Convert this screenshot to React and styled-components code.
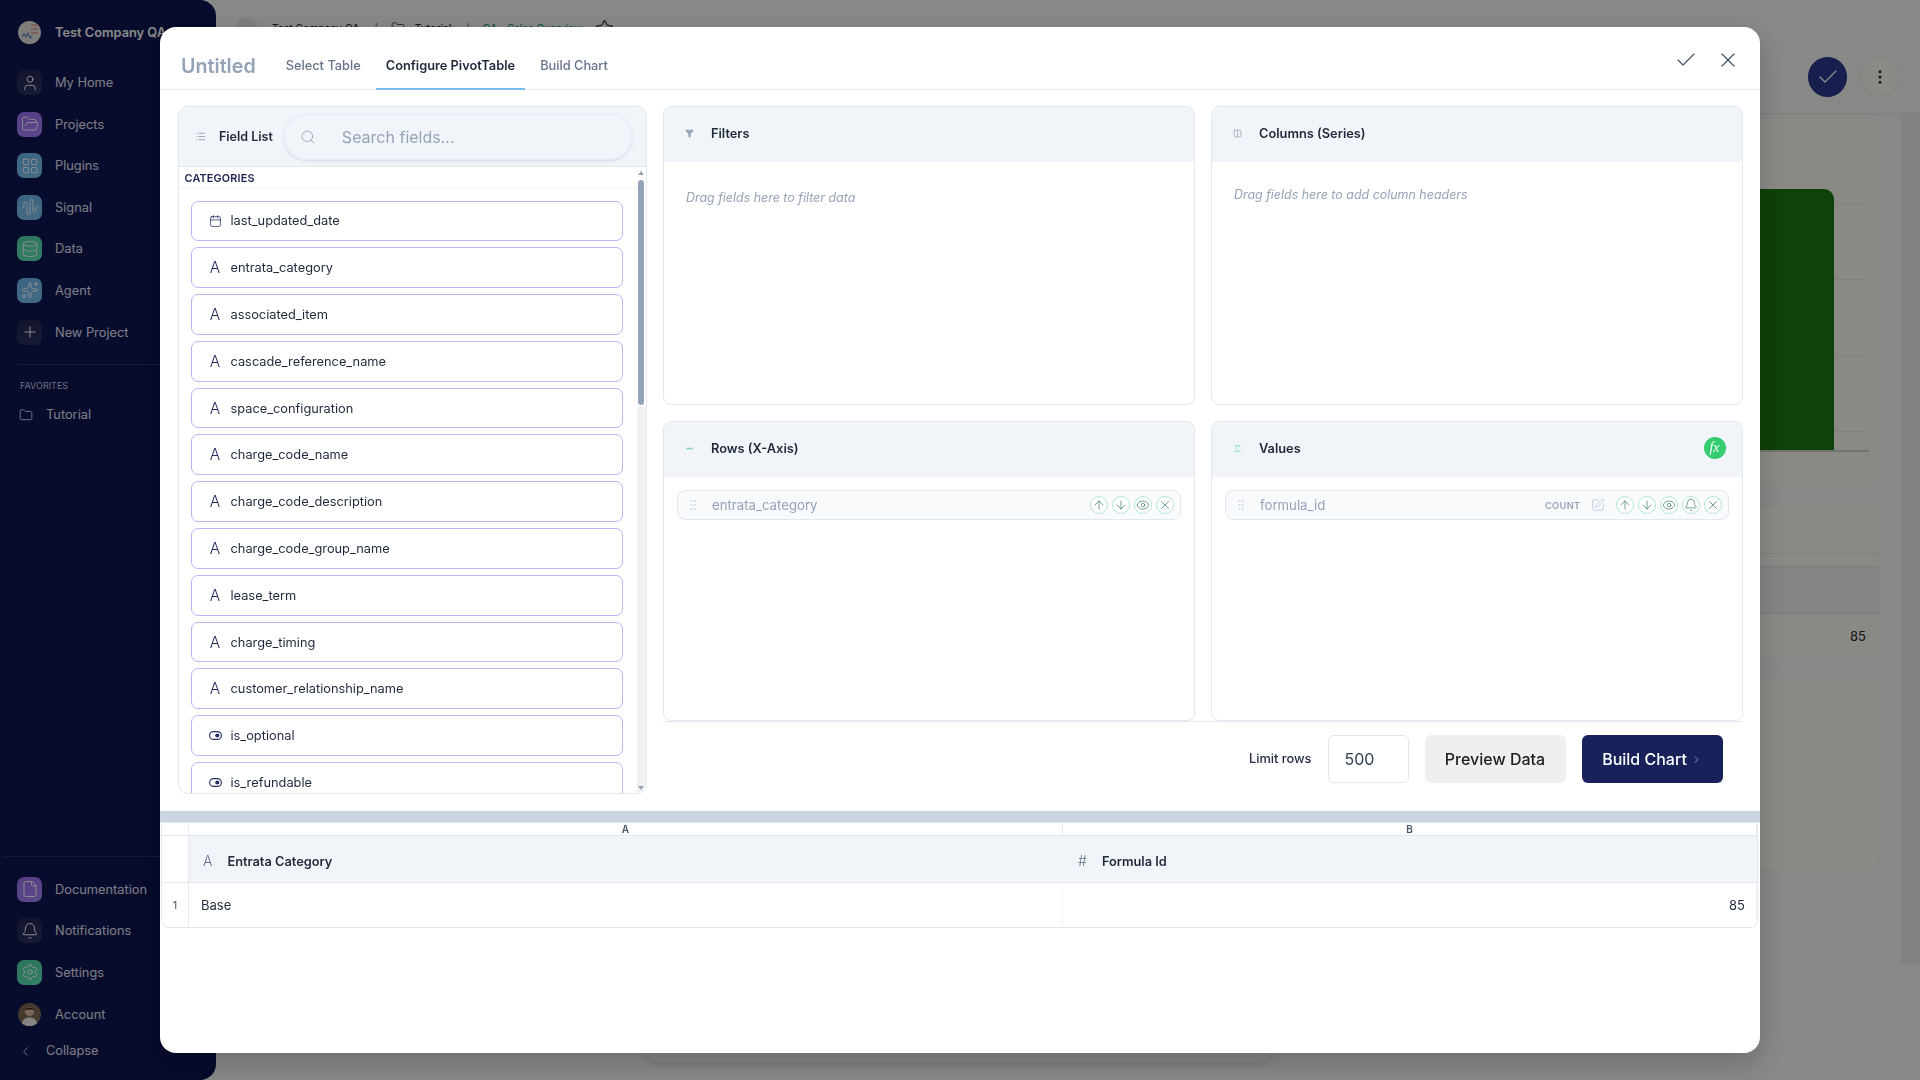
import React from "react";
import styled, { createGlobalStyle } from "styled-components";
import {
  User, FolderOpen, LayoutGrid, AudioWaveform, Database, Sparkles, Plus, File, Bell, Settings,
  ChevronLeft, ChevronRight, Folder, Star, Check, MoreVertical, Search, List, Funnel, Columns2,
  ArrowUp, ArrowDown, Eye, X, SquarePen, GripVertical, Sigma, Calendar, Minus,
} from "lucide-react";

const Global = createGlobalStyle`
  html, body { margin: 0; padding: 0; height: 100%; overflow: hidden; }
  body { font-family: Inter, "Noto Sans", "Liberation Sans", sans-serif; background: #f7f7f5; }
  * { box-sizing: border-box; }
`;

/* ---------- page behind the dialog ---------- */
const Shell = styled.div`
  position: relative;
  display: flex;
  height: 100vh;
  overflow: hidden;
`;
const Sidebar = styled.aside`
  width: 216px;
  flex: none;
  display: flex;
  flex-direction: column;
  background: #0d1450;
  border-radius: 0 16px 16px 0;
  padding-top: 20px;
  color: #e1e5f5;
  font-size: 12.8px;
`;
const Brand = styled.div`
  display: flex;
  align-items: center;
  gap: 13px;
  padding-left: 17px;
  height: 25px;
  margin-bottom: 25px;
  font-weight: 600;
  white-space: nowrap;
  color: #fbfcff;
`;
const NavGroup = styled.nav`
  display: flex;
  flex-direction: column;
  gap: 16.6px;
  padding-left: 17px;
`;
const NavItem = styled.div`
  display: flex;
  align-items: center;
  gap: 13px;
  height: 25px;
  font-weight: 400;
`;
const toneMap = {
  dark: "linear-gradient(160deg,#1f2550,#2c3262)",
  purple: "linear-gradient(160deg,#9a6ff0,#a886ff)",
  blue: "linear-gradient(160deg,#6bb7f0,#7cc4f2)",
  green: "linear-gradient(160deg,#52d6a8,#5ce6bb)",
};
const NavIcon = styled.span`
  width: 25px;
  height: 25px;
  border-radius: 7px;
  display: flex;
  align-items: center;
  justify-content: center;
  background: ${(p) => toneMap[p.$tone]};
  color: #fff;
`;
const NavRule = styled.div`
  height: 1px;
  background: #2a3068;
  margin: ${(p) => p.$margin};
`;
const FavLabel = styled.div`
  padding-left: 20px;
  font-size: 9px;
  line-height: 12px;
  color: #c8cce0;
  margin-bottom: 15px;
`;
const FavItem = styled.div`
  display: flex;
  align-items: center;
  gap: 13px;
  padding-left: 19px;
  line-height: 16px;
`;
const SidebarFoot = styled.div`
  margin-top: auto;
  padding-bottom: 21px;
`;
const Collapse = styled.div`
  display: flex;
  align-items: center;
  gap: 13px;
  padding-left: 18px;
  margin-top: 16.5px;
  line-height: 16px;
`;
const AvatarDot = styled.span`
  width: 23px;
  height: 23px;
  margin: 1px;
  border-radius: 50%;
  overflow: hidden;
  flex: none;
  display: block;
`;

const Main = styled.main`
  flex: 1;
  min-width: 0;
  display: flex;
  flex-direction: column;
`;
const TopBar = styled.header`
  height: 114px;
  flex: none;
  border-bottom: 1px solid #e6e6e2;
`;
const Crumbs = styled.div`
  height: 56px;
  display: flex;
  align-items: center;
  padding-left: 20px;
  font-size: 10.2px;
  font-weight: 500;
  color: #33343c;
`;
const CrumbAvatar = styled.span`
  width: 22px;
  height: 22px;
  border-radius: 50%;
  background: #e8e8ea;
  margin-right: 14px;
`;
const Slash = styled.span`
  margin: 0 13px;
  color: #8a8a90;
  font-weight: 300;
  font-size: 15px;
`;
const CrumbFolder = styled.span`
  display: flex;
  align-items: center;
  gap: 10px;
`;
const CrumbLink = styled.span`
  color: #1f9a86;
  margin-right: 12px;
`;
const Actions = styled.div`
  display: flex;
  justify-content: flex-end;
  gap: 13px;
  padding: 1px 21px 0 0;
`;
const RoundAction = styled.button`
  width: 39px;
  height: 40px;
  padding: 0;
  border-radius: 50%;
  display: flex;
  align-items: center;
  justify-content: center;
  background: ${(p) => (p.$primary ? "#2c388c" : "#fbfcf4")};
  color: ${(p) => (p.$primary ? "#fff" : "#2a2a2a")};
  border: 1px solid ${(p) => (p.$primary ? "#2c388c" : "#ececea")};
`;
const Content = styled.div`
  flex: 1;
  display: flex;
  min-height: 0;
`;
const CardColumn = styled.div`
  flex: 1;
  min-width: 0;
  display: flex;
  flex-direction: column;
  gap: 22px;
  padding: 4px 22px 0 0;
`;
const Track = styled.div`
  width: 19px;
  height: 851px;
  flex: none;
  background: #ededea;
`;
const Card = styled.section`
  background: #fbfcf3;
  border: 1px solid #f2f2ec;
  border-radius: 12px;
  overflow: hidden;
  flex: none;
`;
const ChartCard = styled(Card)`
  padding: 70px 9px 30px 0;
`;
const ChartArea = styled.div`
  height: 263px;
  display: flex;
  justify-content: flex-end;
  padding-right: 35px;
  border-bottom: 2px solid #d2d2cc;
  background: repeating-linear-gradient(to bottom, transparent 0, transparent 14px, #ecece6 14px, #ecece6 15px, transparent 15px, transparent 76px);
`;
const Bar = styled.div`
  width: 300px;
  background: #19780f;
  border-radius: 10px 10px 0 0;
`;
const TableCard = styled(Card)`
  height: 152px;
  padding-top: 47px;
`;
const MiniLetters = styled.div`
  height: 13px;
  border-top: 1px solid #e3e5e8;
`;
const MiniHead = styled.div`
  height: 48px;
  background: #eff1f4;
  border-top: 1px solid #dfe3e8;
  border-bottom: 1px solid #dfe3e8;
`;
const MiniRow = styled.div`
  height: 43px;
  display: flex;
  align-items: center;
  justify-content: flex-end;
  padding-right: 12px;
  font-size: 13px;
  color: #2a2a2e;
`;
const PlainCard = styled(Card)`
  height: 190px;
`;
const Dock = styled.div`
  position: absolute;
  left: 645px;
  bottom: 17px;
  width: 628px;
  height: 60px;
  border-radius: 16px;
  background: #f0f0ee;
  box-shadow: 0 2px 6px rgba(0,0,0,.12);
`;

/* ---------- overlay and dialog ---------- */
const Overlay = styled.div`
  position: fixed;
  inset: 0;
  background: rgba(0, 0, 0, 0.45);
  display: flex;
  align-items: center;
  justify-content: center;
`;
const Dialog = styled.div`
  width: 1600px;
  height: 1026px;
  background: #fff;
  border-radius: 16px;
  overflow: hidden;
  display: flex;
  flex-direction: column;
  box-shadow: 0 10px 30px rgba(0, 0, 0, 0.2);
  color: #1e293b;
`;
const DialogHead = styled.header`
  height: 63px;
  flex: none;
  display: flex;
  align-items: stretch;
  padding: 0 20px 0 21px;
  border-bottom: 1px solid #e2e8f0;
`;
const Title = styled.h1`
  margin: 0 20px 0 0;
  font-size: 19.7px;
  font-weight: 600;
  color: #94a3b8;
  align-self: center;
  padding-top: 16px;
  line-height: 26px;
`;
const Tabs = styled.div`
  display: flex;
  gap: 5px;
`;
const Tab = styled.button`
  background: none;
  border: 0;
  padding: 16px 10px 0;
  margin-bottom: -1px;
  font: inherit;
  font-size: 12.8px;
  font-weight: ${(p) => (p.$active ? 600 : 500)};
  color: ${(p) => (p.$active ? "#1e293b" : "#64748b")};
  border-bottom: 2px solid ${(p) => (p.$active ? "#7cbcec" : "transparent")};
`;
const HeadActions = styled.div`
  margin-left: auto;
  display: flex;
  align-items: center;
  gap: 18px;
  color: #475569;
  padding-top: 3px;
`;
const Workspace = styled.div`
  height: 721px;
  flex: none;
  display: grid;
  grid-template-columns: 468.5px 1fr;
  gap: 16.5px;
  padding: 16px 17.5px 17px 18px;
`;
const FieldPanel = styled.section`
  border: 1px solid #e2e8f0;
  border-radius: 10px;
  overflow: hidden;
  display: flex;
  flex-direction: column;
  min-height: 0;
`;
const FieldHead = styled.div`
  height: 60px;
  flex: none;
  background: #f1f5f9;
  border-bottom: 1px solid #e2e8f0;
  display: flex;
  align-items: center;
  padding: 0 13.5px 0 16px;
  font-size: 12.5px;
  font-weight: 600;
  color: #1e293b;
`;
const HeadLabel = styled.span`
  margin: 0 11px 0 13px;
  white-space: nowrap;
`;
const SearchPill = styled.label`
  flex: 1;
  height: 46px;
  border-radius: 23px;
  background: #f1f5f9;
  box-shadow: 0 1px 3px rgba(148, 163, 184, 0.35), inset 0 0 0 1px #e8edf3;
  display: flex;
  align-items: center;
  gap: 26px;
  padding-left: 16px;
  color: #94a3b8;
  font-size: 16px;
  font-weight: 400;
`;
const FieldBody = styled.div`
  flex: 1;
  min-height: 0;
  display: flex;
`;
const FieldScroll = styled.div`
  flex: 1;
  min-width: 0;
  overflow: hidden;
`;
const CatLabel = styled.div`
  height: 22px;
  border-bottom: 1px solid #f1f5f9;
  padding-left: 5.5px;
  font-size: 10.8px;
  font-weight: 600;
  line-height: 24px;
  letter-spacing: 0.2px;
  color: #1a2352;
`;
const FieldList = styled.div`
  display: flex;
  flex-direction: column;
  gap: 6px;
  padding: 11.5px 13.5px 0 11.5px;
`;
const FieldRow = styled.div`
  height: 40.8px;
  flex: none;
  display: flex;
  align-items: center;
  gap: 9px;
  padding-left: 17px;
  border: 1px solid #c4b0f5;
  border-radius: 7px;
  font-size: 12.8px;
  color: #1e293b;
`;
const TypeSlot = styled.span`
  width: 13px;
  display: flex;
  justify-content: center;
  color: #2a3166;
`;
const TypeLetter = styled.span`
  font-size: 15.5px;
  font-weight: 300;
  line-height: 15px;
  color: #1e2558;
`;
const ScrollRail = styled.div`
  width: 9px;
  flex: none;
  display: flex;
  flex-direction: column;
  align-items: center;
  background: linear-gradient(to bottom, #fff 0, #fff 240px, #f1f1f1 240px);
`;
const RailArrow = styled.span`
  width: 0;
  height: 0;
  border-left: 3px solid transparent;
  border-right: 3px solid transparent;
  margin: ${(p) => p.$margin};
  ${(p) => (p.$up ? "border-bottom: 4px solid #94a3b8;" : "border-top: 4px solid #94a3b8;")}
`;
const RailThumb = styled.div`
  width: 6px;
  height: 225px;
  background: #94a3b8;
  border-radius: 3px;
`;
const RailSpacer = styled.div`
  flex: 1;
`;
const RightSide = styled.div`
  display: flex;
  flex-direction: column;
  min-height: 0;
`;
const ZoneGrid = styled.div`
  height: 615px;
  flex: none;
  display: grid;
  grid-template-columns: 1fr 1fr;
  grid-template-rows: 299px 300px;
  gap: 16px 16.5px;
`;
const Zone = styled.section`
  border: 1px solid #e2e8f0;
  border-radius: 8px;
  overflow: hidden;
  display: flex;
  flex-direction: column;
`;
const ZoneHead = styled.div`
  height: 55px;
  flex: none;
  background: #f1f5f9;
  display: flex;
  align-items: center;
  padding: 0 16px 3px 21px;
  font-size: 12.8px;
  font-weight: 600;
  color: #1e293b;
`;
const ZoneIcon = styled.span`
  width: 9px;
  display: flex;
  justify-content: center;
  margin-right: 17px;
  color: ${(p) => p.$color};
`;
const FxBadge = styled.span`
  margin-left: auto;
  width: 22px;
  height: 22px;
  border-radius: 50%;
  background: #33cc71;
  color: #fff;
  display: flex;
  align-items: center;
  justify-content: center;
  font-family: "Liberation Serif", serif;
  font-style: italic;
  font-weight: 400;
  font-size: 14px;
`;
const Placeholder = styled.p`
  margin: 0;
  padding: ${(p) => p.$top}px 22px 0;
  font-size: 12.45px;
  font-style: italic;
  line-height: 16px;
  color: #94a3b8;
`;
const ZoneBody = styled.div`
  padding: 13px 13px 0;
`;
const Chip = styled.div`
  height: 30px;
  display: flex;
  align-items: center;
  border: 1px solid #e2e8f0;
  border-radius: 8px;
  background: #f8fafc;
  padding: 0 6px 0 8px;
  font-size: 13.2px;
  color: #94a3b8;
`;
const Handle = styled.span`
  display: flex;
  color: #cbd5e1;
  margin-right: 12px;
`;
const ChipControls = styled.span`
  margin-left: auto;
  display: flex;
  align-items: center;
  gap: 4px;
`;
const Agg = styled.span`
  font-size: 9.3px;
  font-weight: 600;
  color: #94a3b8;
  letter-spacing: 0.3px;
  margin-right: 6px;
`;
const EditIcon = styled.span`
  display: flex;
  color: #b4bfce;
  margin-right: 7px;
`;
const RoundIcon = styled.span`
  width: 18px;
  height: 18px;
  border-radius: 50%;
  border: 1px solid #b5e6db;
  display: flex;
  align-items: center;
  justify-content: center;
  color: #47817a;
  background: #fff;
`;
const Footer = styled.div`
  flex: 1;
  border-top: 1px solid #e2e8f0;
  display: flex;
  align-items: flex-start;
  justify-content: flex-end;
  gap: 16px;
  padding: 13px 20px 0 0;
  font-size: 12.8px;
`;
const LimitLabel = styled.span`
  font-weight: 500;
  color: #1e293b;
  line-height: 48px;
`;
const LimitBox = styled.div`
  width: 81px;
  height: 48px;
  border: 1px solid #e2e8f0;
  border-radius: 6px;
  font-size: 16px;
  line-height: 46px;
  padding-left: 16px;
  color: #334155;
`;
const FootButton = styled.button`
  width: 141px;
  height: 48px;
  border: 0;
  border-radius: 6px;
  font: inherit;
  font-size: 16px;
  font-weight: 500;
  background: ${(p) => (p.$primary ? "#18215a" : "#efefef")};
  color: ${(p) => (p.$primary ? "#fff" : "#1e1e1e")};
  display: flex;
  align-items: center;
  justify-content: center;
  gap: 4px;
`;
const SplitBar = styled.div`
  height: 12px;
  flex: none;
  background: #cbd5e1;
  border-bottom: 1px solid #e2e8f0;
`;
const Sheet = styled.div`
  margin: 0 2px 0 1px;
  display: grid;
  grid-template-columns: 27px 874px 1fr;
  grid-template-rows: 13px 47px 44px;
  border: 1px solid #e2e8f0;
  border-top: 0;
  border-radius: 0 0 8px 8px;
  overflow: hidden;
`;
const LetterCell = styled.div`
  border-right: 1px solid #e8edf3;
  border-bottom: 1px solid #e2e8f0;
  display: flex;
  align-items: center;
  justify-content: center;
  font-size: 10px;
  font-weight: 600;
  color: #475569;
`;
const HeadCell = styled.div`
  background: ${(p) => (p.$blank ? "#fff" : "#f1f5f9")};
  border-right: 1px solid ${(p) => (p.$blank ? "#e2e8f0" : "transparent")};
  border-bottom: 1px solid #e2e8f0;
  display: flex;
  align-items: center;
  gap: 15px;
  padding: 5px 0 0 ${(p) => p.$pad || 0}px;
  font-size: 12.8px;
  font-weight: 600;
  color: #1e293b;
`;
const HeadGlyph = styled.span`
  font-weight: 300;
  font-size: 14px;
  color: #64748b;
  margin-top: -2px;
`;
const IndexCell = styled.div`
  border-right: 1px solid #e2e8f0;
  display: flex;
  align-items: center;
  justify-content: center;
  font-size: 11px;
  color: #475569;
`;
const DataCell = styled.div`
  border-right: 1px solid #f1f5f9;
  display: flex;
  align-items: center;
  justify-content: ${(p) => (p.$right ? "flex-end" : "flex-start")};
  padding: ${(p) => (p.$right ? "0 11px 0 0" : "0 0 0 12px")};
  font-size: 13px;
  color: #1e293b;
`;

const navTop = [
  ["My Home", User, "dark"],
  ["Projects", FolderOpen, "purple"],
  ["Plugins", LayoutGrid, "blue"],
  ["Signal", AudioWaveform, "blue"],
  ["Data", Database, "green"],
  ["Agent", Sparkles, "blue"],
  ["New Project", Plus, "dark"],
];
const navBottom = [
  ["Documentation", File, "purple"],
  ["Notifications", Bell, "dark"],
  ["Settings", Settings, "green"],
];
const fields = [
  ["last_updated_date", "date"],
  ["entrata_category", "text"],
  ["associated_item", "text"],
  ["cascade_reference_name", "text"],
  ["space_configuration", "text"],
  ["charge_code_name", "text"],
  ["charge_code_description", "text"],
  ["charge_code_group_name", "text"],
  ["lease_term", "text"],
  ["charge_timing", "text"],
  ["customer_relationship_name", "text"],
  ["is_optional", "bool"],
  ["is_refundable", "bool"],
];

const BoolIcon = () => (
  <svg width="15" height="15" viewBox="0 0 15 15" fill="none">
    <rect x="0.7" y="3" width="13.6" height="9" rx="4.5" stroke="currentColor" strokeWidth="1.3" />
    <circle cx="9.6" cy="7.5" r="2.4" fill="currentColor" />
  </svg>
);
const CompanyLogo = () => (
  <svg viewBox="0 0 23 23" width="23" height="23">
    <rect width="23" height="23" fill="#e6e3dd" />
    <path d="M13 3h7v2h-7zM13 7h7v2h-7zM13 11h7v2h-7z" fill="#e0a9a4" />
    <path d="M4 16l2-3 2 3 2-4 2 5 2-2" stroke="#6c8fc7" strokeWidth="1.3" fill="none" />
  </svg>
);
const AccountPhoto = () => (
  <svg viewBox="0 0 23 23" width="23" height="23">
    <rect width="23" height="23" fill="#7d6a55" />
    <circle cx="11.5" cy="8.5" r="4.6" fill="#e0bda0" />
    <path d="M6.8 7.5C7 3.5 16 3.5 16.2 7.5 14 6 9 6 6.8 7.5Z" fill="#3b2c22" />
    <path d="M3 23c.6-6 4.4-8.5 8.5-8.5S19.4 17 20 23Z" fill="#f2f0ea" />
  </svg>
);

const typeIcon = (t) => {
  if (t === "date") return <Calendar size={16} strokeWidth={1.4} />;
  if (t === "bool") return <BoolIcon />;
  return <TypeLetter>A</TypeLetter>;
};
const Ctrl = ({ icon: I }) => (
  <RoundIcon>
    <I size={14} strokeWidth={1.3} />
  </RoundIcon>
);

export default function App() {
  return (
    <Shell>
      <Global />
      <Sidebar>
        <Brand>
          <AvatarDot><CompanyLogo /></AvatarDot>
          Test Company QA
        </Brand>
        <NavGroup>
          {navTop.map(([label, I, tone]) => (
            <NavItem key={label}>
              <NavIcon $tone={tone}><I size={18} strokeWidth={1.3} /></NavIcon>
              {label}
            </NavItem>
          ))}
        </NavGroup>
        <NavRule $margin="19px 0 15px 17px" />
        <FavLabel>FAVORITES</FavLabel>
        <FavItem>
          <Folder size={14} strokeWidth={1.5} />
          Tutorial
        </FavItem>
        <SidebarFoot>
          <NavRule $margin="0 0 20px 4px" />
          <NavGroup>
            {navBottom.map(([label, I, tone]) => (
              <NavItem key={label}>
                <NavIcon $tone={tone}><I size={18} strokeWidth={1.3} /></NavIcon>
                {label}
              </NavItem>
            ))}
            <NavItem>
              <AvatarDot><AccountPhoto /></AvatarDot>
              Account
            </NavItem>
          </NavGroup>
          <Collapse>
            <ChevronLeft size={15} strokeWidth={1.4} />
            Collapse
          </Collapse>
        </SidebarFoot>
      </Sidebar>

      <Main>
        <TopBar>
          <Crumbs>
            <CrumbAvatar />
            Test Company QA
            <Slash>/</Slash>
            <CrumbFolder><Folder size={14} strokeWidth={1.5} />Tutorial</CrumbFolder>
            <Slash>/</Slash>
            <CrumbLink>QA - Sales Overview</CrumbLink>
            <Star size={19} strokeWidth={1.5} />
          </Crumbs>
          <Actions>
            <RoundAction $primary><Check size={24} strokeWidth={1.3} /></RoundAction>
            <RoundAction><MoreVertical size={18} /></RoundAction>
          </Actions>
        </TopBar>
        <Content>
          <CardColumn>
            <ChartCard>
              <ChartArea><Bar /></ChartArea>
            </ChartCard>
            <TableCard>
              <MiniLetters />
              <MiniHead />
              <MiniRow>85</MiniRow>
            </TableCard>
            <PlainCard />
          </CardColumn>
          <Track />
        </Content>
      </Main>
      <Dock />

      <Overlay>
        <Dialog>
          <DialogHead>
            <Title>Untitled</Title>
            <Tabs>
              <Tab>Select Table</Tab>
              <Tab $active>Configure PivotTable</Tab>
              <Tab>Build Chart</Tab>
            </Tabs>
            <HeadActions>
              <Check size={24} strokeWidth={1.2} />
              <X size={24} strokeWidth={1.2} />
            </HeadActions>
          </DialogHead>

          <Workspace>
            <FieldPanel>
              <FieldHead>
                <List size={11} color="#94a3b8" />
                <HeadLabel>Field List</HeadLabel>
                <SearchPill>
                  <Search size={16} strokeWidth={1.3} />
                  Search fields...
                </SearchPill>
              </FieldHead>
              <FieldBody>
                <FieldScroll>
                  <CatLabel>CATEGORIES</CatLabel>
                  <FieldList>
                    {fields.map(([name, t]) => (
                      <FieldRow key={name}>
                        <TypeSlot>{typeIcon(t)}</TypeSlot>
                        {name}
                      </FieldRow>
                    ))}
                  </FieldList>
                </FieldScroll>
                <ScrollRail>
                  <RailArrow $up $margin="4px 0 5px" />
                  <RailThumb />
                  <RailSpacer />
                  <RailArrow $margin="0 0 3px" />
                </ScrollRail>
              </FieldBody>
            </FieldPanel>

            <RightSide>
              <ZoneGrid>
                <Zone>
                  <ZoneHead>
                    <ZoneIcon $color="#94a3b8"><Funnel size={9} fill="currentColor" /></ZoneIcon>
                    Filters
                  </ZoneHead>
                  <Placeholder $top={28}>Drag fields here to filter data</Placeholder>
                </Zone>
                <Zone>
                  <ZoneHead>
                    <ZoneIcon $color="#94a3b8"><Columns2 size={9} /></ZoneIcon>
                    Columns (Series)
                  </ZoneHead>
                  <Placeholder $top={25}>Drag fields here to add column headers</Placeholder>
                </Zone>
                <Zone>
                  <ZoneHead>
                    <ZoneIcon $color="#7fd6bd"><Minus size={9} strokeWidth={4} /></ZoneIcon>
                    Rows (X-Axis)
                  </ZoneHead>
                  <ZoneBody>
                    <Chip>
                      <Handle><GripVertical size={14} strokeWidth={1.5} /></Handle>
                      entrata_category
                      <ChipControls>
                        <Ctrl icon={ArrowUp} />
                        <Ctrl icon={ArrowDown} />
                        <Ctrl icon={Eye} />
                        <Ctrl icon={X} />
                      </ChipControls>
                    </Chip>
                  </ZoneBody>
                </Zone>
                <Zone>
                  <ZoneHead>
                    <ZoneIcon $color="#7fe0a8"><Sigma size={9} strokeWidth={2} /></ZoneIcon>
                    Values
                    <FxBadge>fx</FxBadge>
                  </ZoneHead>
                  <ZoneBody>
                    <Chip>
                      <Handle><GripVertical size={14} strokeWidth={1.5} /></Handle>
                      formula_id
                      <ChipControls>
                        <Agg>COUNT</Agg>
                        <EditIcon><SquarePen size={14} strokeWidth={1.3} /></EditIcon>
                        <Ctrl icon={ArrowUp} />
                        <Ctrl icon={ArrowDown} />
                        <Ctrl icon={Eye} />
                        <Ctrl icon={Bell} />
                        <Ctrl icon={X} />
                      </ChipControls>
                    </Chip>
                  </ZoneBody>
                </Zone>
              </ZoneGrid>
              <Footer>
                <LimitLabel>Limit rows</LimitLabel>
                <LimitBox>500</LimitBox>
                <FootButton>Preview Data</FootButton>
                <FootButton $primary>
                  Build Chart
                  <ChevronRight size={11} color="#94a3b8" />
                </FootButton>
              </Footer>
            </RightSide>
          </Workspace>

          <SplitBar />
          <Sheet>
            <LetterCell />
            <LetterCell>A</LetterCell>
            <LetterCell>B</LetterCell>
            <HeadCell $blank />
            <HeadCell $pad={14}><HeadGlyph>A</HeadGlyph>Entrata Category</HeadCell>
            <HeadCell $pad={15}><HeadGlyph>#</HeadGlyph>Formula Id</HeadCell>
            <IndexCell>1</IndexCell>
            <DataCell>Base</DataCell>
            <DataCell $right>85</DataCell>
          </Sheet>
        </Dialog>
      </Overlay>
    </Shell>
  );
}
